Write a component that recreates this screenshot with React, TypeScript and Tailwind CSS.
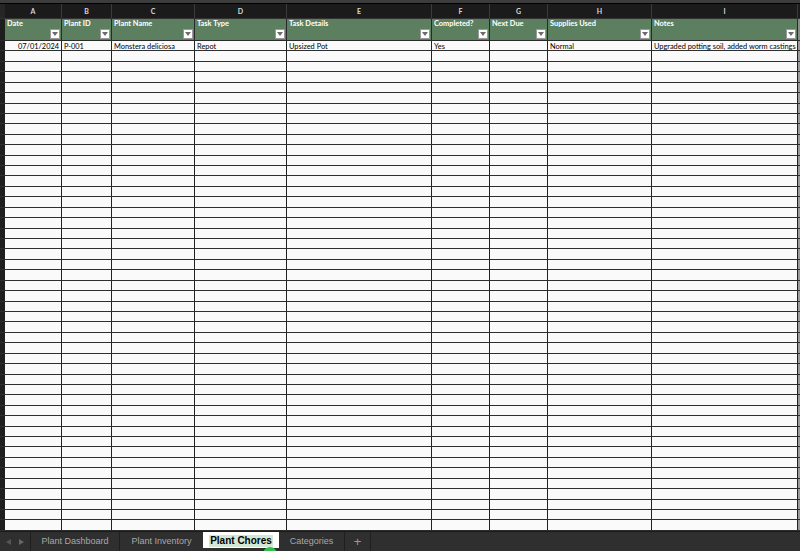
import React from 'react';

const GRID = 'grid grid-cols-[5px_57px_50px_83px_92px_145px_58px_58px_104px_146px_2px]';

const letters = ['A', 'B', 'C', 'D', 'E', 'F', 'G', 'H', 'I'];
const headers = [
  'Date',
  'Plant ID',
  'Plant Name',
  'Task Type',
  'Task Details',
  'Completed?',
  'Next Due',
  'Supplies Used',
  'Notes',
];
const firstRow = [
  '07/01/2024',
  'P-001',
  'Monstera deliciosa',
  'Repot',
  'Upsized Pot',
  'Yes',
  '',
  'Normal',
  'Upgraded potting soil, added worm castings',
];

const ROW_COUNT = 47;

function FilterButton() {
  return (
    <div className="self-end w-[10px] h-[10px] bg-white border border-[#9a9a9a] flex items-center justify-center">
      <svg width="6" height="4" viewBox="0 0 6 4">
        <path d="M0 0 L6 0 L3 4 Z" fill="#6b6b6b" />
      </svg>
    </div>
  );
}

export default function App() {
  return (
    <div
      className="w-[800px] h-[551px] bg-[#1c1c1c] flex flex-col overflow-hidden relative"
      style={{ fontFamily: 'Lato, "Open Sans", sans-serif' }}
    >
      {/* top strip */}
      <div className="h-[3px] bg-[#3c3c3c] border-b border-black box-content" />

      {/* column letters */}
      <div className={`${GRID} h-[15px] bg-[#1b1b1b] border-b border-[#333]`}>
        <div className="bg-[#262626]" />
        {letters.map((l) => (
          <div
            key={l}
            className="border-r border-[#3a3a3a] flex items-center justify-center text-[7px] font-bold text-[#d8d8d8]"
          >
            {l}
          </div>
        ))}
        <div className="bg-[#1b1b1b]" />
      </div>

      {/* green header row */}
      <div className={`${GRID} h-[22px] border-b border-[#2a2a2a]`}>
        <div className="bg-[#1e1e1e]" />
        {headers.map((h) => (
          <div
            key={h}
            className="bg-[#5b7f5f] border-r border-[#2a2a2a] flex flex-col justify-between pl-[2px] pr-[1px] pt-[1px] pb-[1px]"
          >
            <span className="text-[7.4px] leading-[8px] font-bold text-white whitespace-nowrap overflow-hidden">
              {h}
            </span>
            <FilterButton />
          </div>
        ))}
        <div className="bg-[#8a8a8a]" />
      </div>

      {/* data rows */}
      <div className="flex-1 flex flex-col">
        {Array.from({ length: ROW_COUNT }).map((_, r) => (
          <div key={r} className={`${GRID} flex-1 border-b border-[#2e2e2e]`}>
            <div className="bg-[#1e1e1e]" />
            {firstRow.map((v, c) => (
              <div
                key={c}
                className={`bg-[#fafafa] border-r border-[#222] flex items-center pt-[1px] px-[2px] text-[7.4px] leading-none text-black whitespace-nowrap overflow-hidden ${
                  c === 0 ? 'justify-end' : ''
                }`}
              >
                {r === 0 ? v : ''}
              </div>
            ))}
            <div className="bg-[#9a9a9a]" />
          </div>
        ))}
      </div>

      {/* sheet tabs */}
      <div
        className="h-[19px] bg-[#2f2f2f] border-t border-[#1a1a1a] flex items-stretch text-[9px] text-[#a8a8a8] box-content"
        style={{ fontFamily: '"Liberation Sans", Arial, sans-serif' }}
      >
        <div className="w-[31px] flex items-center justify-around px-[2px] border-r border-[#1f1f1f]">
          <svg width="5" height="6" viewBox="0 0 5 6">
            <path d="M5 0 L0 3 L5 6 Z" fill="#555" />
          </svg>
          <svg width="5" height="6" viewBox="0 0 5 6">
            <path d="M0 0 L5 3 L0 6 Z" fill="#666" />
          </svg>
        </div>
        <div className="w-[89px] flex items-center justify-center border-r border-[#1f1f1f]">
          Plant Dashboard
        </div>
        <div className="w-[83px] flex items-center justify-center">Plant Inventory</div>
        <div className="w-[76px] flex items-start justify-center bg-white h-[16px]">
          <span className="mt-[3px] px-[1px] bg-[#d3e8d4] text-black font-bold text-[10px] leading-[12px]">
            Plant Chores
          </span>
        </div>
        <div className="w-[66px] flex items-center justify-center border-r border-[#1f1f1f]">
          Categories
        </div>
        <div className="w-[26px] flex items-center justify-center border-r border-[#1f1f1f] text-[13px] text-[#9a9a9a]">
          +
        </div>
        <div className="flex-1" />
      </div>

      {/* green indicator dot */}
      <div className="absolute left-[263px] top-[547px] w-[14px] h-[14px] rounded-full bg-[#2fbf4a]" />
    </div>
  );
}
